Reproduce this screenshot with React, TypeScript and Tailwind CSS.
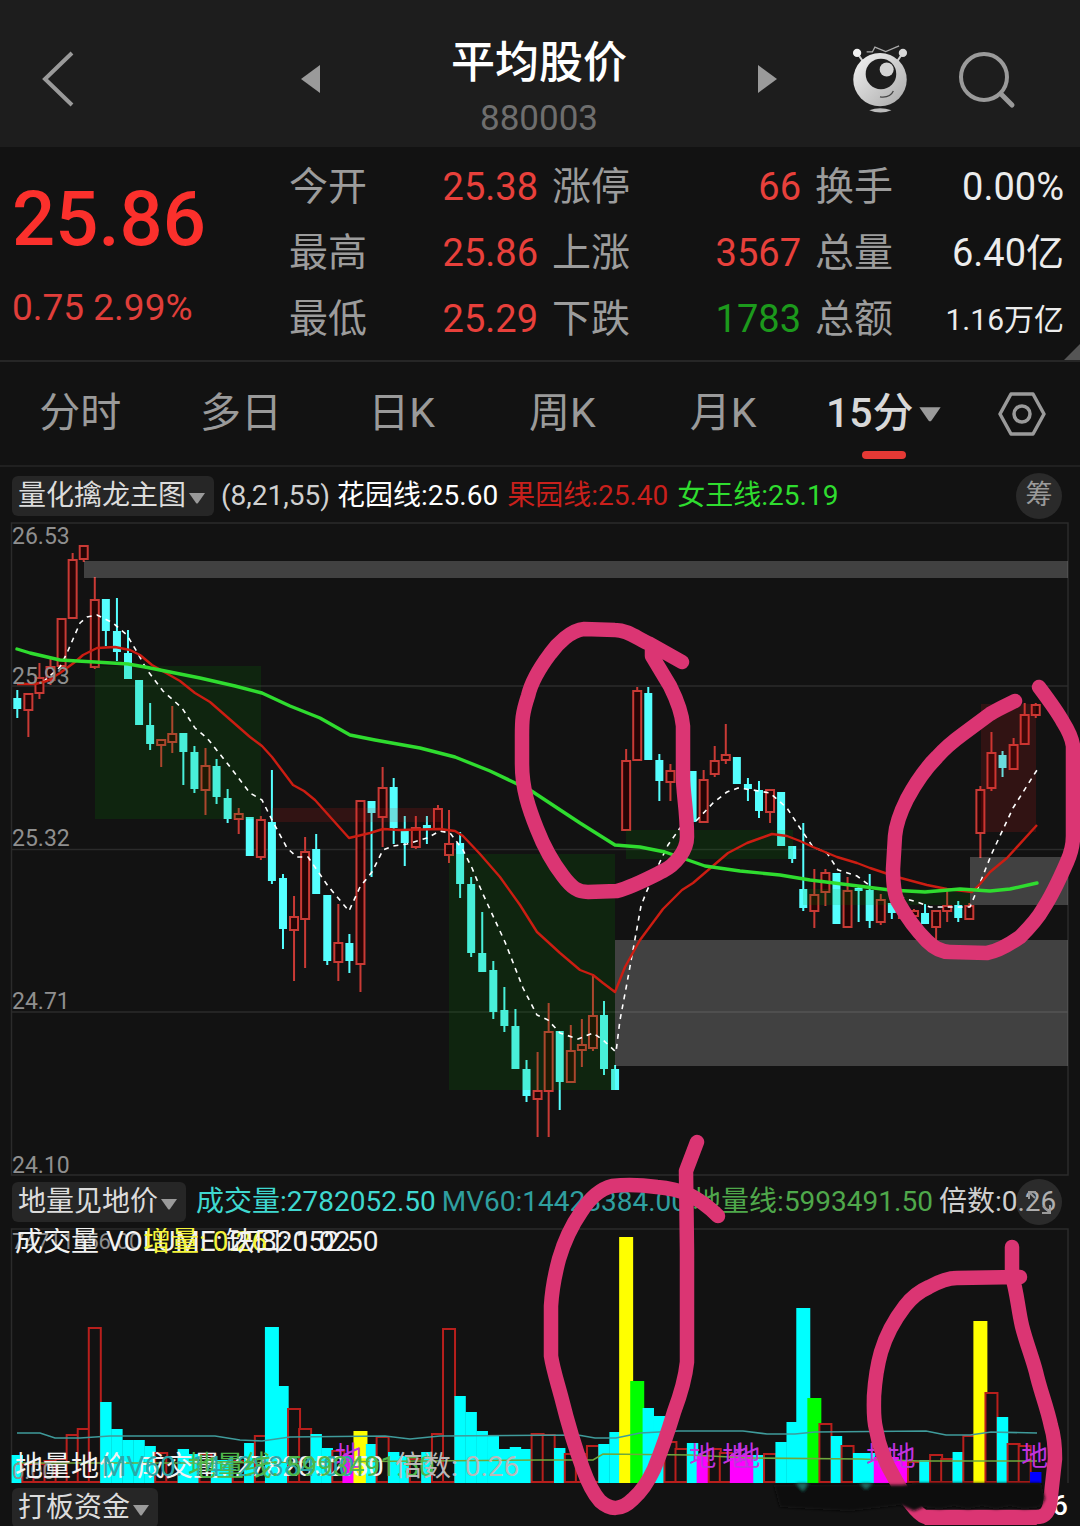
import { clsx } from "clsx";

type Tone = "up" | "down";
// [tone, high, body top, body bottom, low]
type Candle = [Tone, number, number, number, number];

const STEP = 11.07;
const barX = (index: number) => 17.3 + STEP * index;

const quotes = [
  { label: "今开", value: "25.38", color: "text-[#e8403b]" },
  { label: "涨停", value: "66", color: "text-[#e8403b]" },
  { label: "换手", value: "0.00%", color: "text-[#ececec]" },
  { label: "最高", value: "25.86", color: "text-[#e8403b]" },
  { label: "上涨", value: "3567", color: "text-[#e8403b]" },
  { label: "总量", value: "6.40亿", color: "text-[#ececec]" },
  { label: "最低", value: "25.29", color: "text-[#e8403b]" },
  { label: "下跌", value: "1783", color: "text-[#1c9a1c]" },
  { label: "总额", value: "1.16万亿", color: "text-[#ececec]", small: true },
];

const tabs = ["分时", "多日", "日K", "周K", "月K"];

const candles: Candle[] = [
  ["down", 690, 698, 709, 718],
  ["up", 693, 693, 710, 737],
  ["up", 663, 677, 693, 699],
  ["up", 659, 666, 680, 685],
  ["up", 618, 618, 666, 666],
  ["up", 553, 559, 618, 618],
  ["up", 545, 545, 559, 562],
  ["up", 577, 599, 667, 669],
  ["down", 599, 599, 631, 646],
  ["down", 598, 631, 652, 661],
  ["down", 630, 653, 679, 679],
  ["down", 680, 680, 725, 725],
  ["down", 703, 725, 744, 750],
  ["up", 739, 739, 745, 767],
  ["up", 706, 733, 742, 753],
  ["down", 733, 733, 752, 785],
  ["down", 746, 752, 789, 793],
  ["up", 748, 765, 790, 815],
  ["down", 759, 766, 797, 804],
  ["down", 789, 798, 819, 823],
  ["up", 808, 813, 819, 834],
  ["down", 817, 817, 856, 856],
  ["up", 816, 819, 857, 860],
  ["down", 770, 822, 881, 884],
  ["down", 874, 878, 929, 949],
  ["up", 896, 916, 930, 981],
  ["up", 837, 851, 919, 968],
  ["down", 834, 849, 894, 894],
  ["down", 895, 895, 961, 965],
  ["up", 904, 942, 962, 981],
  ["down", 934, 943, 961, 973],
  ["up", 800, 800, 964, 992],
  ["down", 801, 801, 813, 877],
  ["up", 767, 787, 817, 847],
  ["down", 778, 787, 828, 844],
  ["down", 816, 831, 843, 866],
  ["up", 816, 827, 847, 849],
  ["down", 816, 825, 829, 844],
  ["up", 805, 808, 829, 829],
  ["up", 810, 843, 855, 863],
  ["down", 832, 843, 884, 898],
  ["down", 877, 884, 953, 957],
  ["down", 912, 953, 972, 972],
  ["down", 961, 970, 1012, 1019],
  ["down", 987, 1010, 1026, 1032],
  ["down", 1009, 1026, 1069, 1069],
  ["down", 1060, 1069, 1096, 1102],
  ["up", 1052, 1090, 1099, 1137],
  ["up", 1003, 1031, 1091, 1137],
  ["down", 1031, 1031, 1082, 1110],
  ["up", 1025, 1050, 1082, 1082],
  ["up", 1019, 1044, 1050, 1067],
  ["up", 975, 1015, 1048, 1051],
  ["down", 1001, 1015, 1069, 1075],
  ["down", 1065, 1069, 1090, 1090],
  ["up", 749, 760, 830, 830],
  ["up", 687, 690, 760, 760],
  ["down", 687, 693, 760, 760],
  ["down", 754, 760, 781, 801],
  ["up", 764, 770, 782, 801],
  ["up", 772, 772, 782, 782],
  ["down", 771, 771, 822, 822],
  ["up", 770, 779, 822, 822],
  ["up", 746, 760, 774, 777],
  ["up", 724, 754, 760, 764],
  ["down", 757, 757, 784, 784],
  ["down", 778, 784, 789, 801],
  ["down", 781, 790, 811, 818],
  ["up", 789, 789, 812, 823],
  ["down", 792, 792, 846, 846],
  ["down", 846, 846, 859, 863],
  ["down", 823, 889, 908, 911],
  ["up", 869, 894, 911, 928],
  ["up", 869, 872, 892, 906],
  ["down", 873, 873, 924, 924],
  ["up", 877, 890, 927, 927],
  ["down", 886, 888, 891, 922],
  ["down", 874, 890, 921, 928],
  ["up", 894, 899, 922, 925],
  ["down", 903, 903, 913, 919],
  ["up", 908, 910, 918, 918],
  ["up", 909, 910, 916, 922],
  ["down", 904, 913, 924, 924],
  ["up", 910, 910, 927, 941],
  ["up", 890, 905, 911, 922],
  ["down", 901, 905, 918, 922],
  ["up", 903, 905, 919, 919],
  ["up", 786, 789, 833, 858],
  ["up", 732, 752, 788, 791],
  ["down", 751, 755, 768, 777],
  ["up", 738, 744, 769, 769],
  ["up", 703, 714, 744, 744],
  ["up", 703, 704, 715, 718],
];

const zones = [
  { x: 84, y: 561, w: 984, h: 17, fill: "rgba(255,255,255,.2)" },
  { x: 95, y: 666, w: 166, h: 153, fill: "rgba(0,150,0,.15)" },
  { x: 272, y: 808, w: 171, h: 14, fill: "rgba(230,30,30,.15)" },
  { x: 449, y: 854, w: 166, h: 236, fill: "rgba(0,150,0,.15)" },
  { x: 615, y: 940, w: 453, h: 126, fill: "rgba(255,255,255,.2)" },
  { x: 626, y: 830, w: 167, h: 29, fill: "rgba(0,150,0,.15)" },
  { x: 803, y: 889, w: 167, h: 16, fill: "rgba(0,150,0,.15)" },
  { x: 981, y: 704, w: 55, h: 128, fill: "rgba(230,30,30,.15)" },
  { x: 970, y: 857, w: 98, h: 48, fill: "rgba(255,255,255,.2)" },
];

const priceTicks = [
  { label: "26.53", y: 544 },
  { label: "25.93", y: 684 },
  { label: "25.32", y: 846 },
  { label: "24.71", y: 1009 },
  { label: "24.10", y: 1173 },
];

const slowLine =
  "17,649 30,653 60,660 95,662 128,664 145,667 200,678 235,686 262,693 290,706 320,718 350,735 375,740 420,748 455,757 490,771 530,790 580,823 615,845 640,847 665,852 705,866 740,871 780,875 810,880 850,885 890,890 925,892 960,889 990,891 1010,889 1037,883";
const midLine =
  "17,684 35,684 47,681 60,673 75,662 83,655 97,648 115,647 130,650 140,655 152,665 180,681 195,693 210,702 250,737 262,746 272,757 293,785 304,791 315,800 349,838 370,833 383,829 400,830 440,829 455,831 463,836 480,854 500,877 520,905 537,932 548,942 560,953 580,970 593,975 603,983 615,992 625,967 640,940 663,909 682,890 693,883 728,853 747,843 772,834 787,836 800,841 813,847 837,857 857,863 870,868 897,877 927,885 947,889 972,892 980,884 990,872 1007,858 1037,825";
const fastLine =
  "43,682 60,667 67,653 80,623 87,617 97,615 113,623 127,635 137,652 147,670 163,691 182,708 195,728 207,738 227,763 250,793 262,800 272,820 287,848 297,857 308,857 328,886 349,911 360,887 372,872 383,850 393,846 407,844 427,838 440,831 450,833 463,850 472,868 482,892 505,942 523,988 537,1015 548,1020 560,1033 578,1039 593,1033 603,1040 616,1052 620,1020 627,983 641,906 646,893 657,868 668,845 680,828 697,820 713,803 727,792 738,788 753,790 770,793 787,808 800,828 813,847 827,853 838,870 857,876 873,888 890,890 903,898 917,902 930,907 970,907 980,883 992,853 1013,808 1037,770";

// c cyan, r hollow red, y yellow, g green, m magenta, b blue
const volumes =
  "c1455 r1463 r1463 r1460 r1458 r1434 r1428 r1327 c1402 c1429 c1440 c1440 c1446 r1452 r1456 c1449 c1454 r1453 c1460 c1460 r1460 c1443 r1435 c1327 c1386 r1408 r1428 c1434 c1448 r1450 m1455 y1431 c1444 r1436 c1452 c1456 r1458 c1452 r1433 r1328 c1396 c1412 c1431 c1435 c1449 c1447 c1449 r1433 r1434 c1448 r1453 r1453 r1445 c1444 c1432 y1237 g1381 c1408 c1416 r1441 r1448 c1443 m1455 r1448 r1452 m1455 m1455 c1455 r1453 c1442 c1422 c1308 g1398 r1423 c1436 r1445 c1453 c1453 m1457 m1457 m1461 r1461 c1460 r1454 r1458 c1452 r1435 y1321 r1392 c1417 r1443 r1445 b1472"
    .split(" ")
    .map((bar) => ({ kind: bar[0], top: Number(bar.slice(1)) }));

const volumeFill: Record<string, string> = {
  c: "#00ffff",
  y: "#ffff00",
  g: "#00ff00",
  m: "#ff00ff",
  b: "#0000ff",
};

const lowMarks = [30, 62, 65, 66, 78, 80, 92];

const volumeAverage =
  "17,1433 40,1433 55,1438 80,1438 110,1436 215,1436 240,1440 262,1441 290,1437 385,1436 410,1439 440,1436 578,1435 595,1438 616,1438 640,1433 678,1431 743,1431 767,1434 795,1434 815,1432 926,1431 946,1435 970,1435 991,1432 1037,1433";
const volumeFloor =
  "17,1463 200,1463 540,1460 593,1460 603,1454 690,1455 750,1458 860,1459 920,1461 1037,1461";

function Caret({ className }: { className?: string }) {
  return (
    <svg viewBox="0 0 18 12" className={clsx("shrink-0", className)} aria-hidden="true">
      <path d="M1 1h16l-7 10q-1 1-2 0z" fill="#9a9a9a" />
    </svg>
  );
}

function IndicatorButton({ name }: { name: string }) {
  return (
    <button className="flex h-10 shrink-0 items-center gap-0.5 rounded-md bg-[#262626] pr-2 pl-1.5 text-[28px] leading-10 text-[#dcdcdc]">
      {name}
      <Caret className="mt-1 w-[18px]" />
    </button>
  );
}

function Mascot() {
  return (
    <svg viewBox="0 0 200 220" className="h-[70px] w-16" aria-hidden="true">
      <defs>
        <linearGradient id="mascot" x1="0" y1="0" x2="1" y2="1">
          <stop offset="0" stopColor="#f4f4f4" />
          <stop offset="1" stopColor="#a8a8a8" />
        </linearGradient>
      </defs>
      <path d="M58 25h18l8-15 34 14 42-18" fill="none" stroke="#aaa" strokeWidth="4" />
      <path d="M28 28l22 32M172 28l-22 32" stroke="#ccc" strokeWidth="6" />
      <circle cx="28" cy="28" r="13" fill="#f0f0f0" />
      <circle cx="172" cy="28" r="13" fill="#d8d8d8" />
      <circle cx="100" cy="112" r="84" fill="url(#mascot)" />
      <circle cx="103" cy="94" r="48" fill="#1d1d1d" />
      <circle cx="121" cy="80" r="22" fill="#d4d4d4" />
      <path d="M100 166q32 4 42-18" fill="none" stroke="#444" strokeWidth="4" />
      <path d="M66 208q34-12 70 0-34 14-70 0z" fill="#bbb" />
    </svg>
  );
}

function Header() {
  return (
    <header className="flex h-[147px] items-center bg-[#1d1d1d] px-8 pt-2.5">
      <button aria-label="返回" className="w-12">
        <svg viewBox="0 0 48 60" className="h-[60px] w-12">
          <path d="M40 4L13 30l27 26" fill="none" stroke="#9a9a9a" strokeWidth="4" />
        </svg>
      </button>
      <div className="ml-[220px] flex flex-1 items-center justify-between">
        <button aria-label="上一个">
          <svg viewBox="0 0 20 28" className="h-7 w-5">
            <path d="M20 0v28L1 14z" fill="#9a9a9a" />
          </svg>
        </button>
        <div className="pt-6 text-center">
          <h1 className="text-[44px] leading-[52px] font-medium text-white">平均股价</h1>
          <p className="pt-1 text-[35px] leading-[52px] text-[#6e6e6e]">880003</p>
        </div>
        <button aria-label="下一个">
          <svg viewBox="0 0 20 28" className="h-7 w-5">
            <path d="M0 0v28l19-14z" fill="#9a9a9a" />
          </svg>
        </button>
      </div>
      <button aria-label="助手" className="ml-[70px] w-16">
        <Mascot />
      </button>
      <button aria-label="搜索" className="mr-7 ml-11 w-16">
        <svg viewBox="0 0 64 64" className="size-16" fill="none" stroke="#9a9a9a">
          <circle cx="28" cy="30" r="23" strokeWidth="4" />
          <path d="M45 47l11 11" strokeWidth="5" strokeLinecap="round" />
        </svg>
      </button>
    </header>
  );
}

function Quote() {
  return (
    <section className="relative flex border-b-2 border-[#262626] pt-[7px] pr-4 pb-2">
      <div className="w-[289px] shrink-0 pl-3">
        <p className="pt-5 text-[76px] leading-[90px] font-medium text-[#fb302c]">25.86</p>
        <p className="pt-5 text-[37px] leading-12 text-[#e03e3a]">0.75 2.99%</p>
      </div>
      <dl className="grid flex-1 grid-cols-3 gap-x-3.5">
        {quotes.map((q) => (
          <div key={q.label} className="flex h-[66px] items-center justify-between">
            <dt className="text-[39px] text-[#9c9c9c]">{q.label}</dt>
            <dd className={clsx("whitespace-nowrap", q.small ? "text-[30px]" : "text-[38px]", q.color)}>{q.value}</dd>
          </div>
        ))}
      </dl>
      <svg viewBox="0 0 16 16" className="absolute right-0 bottom-0 size-4" aria-hidden="true">
        <path d="M16 0v16H0z" fill="#555" />
      </svg>
    </section>
  );
}

function PeriodTabs() {
  return (
    <nav className="flex h-[105px] border-b-2 border-[#202020] text-[41px]">
      {tabs.map((tab) => (
        <button key={tab} className="flex-1 text-[#9a9a9a]">
          {tab}
        </button>
      ))}
      <button className="relative flex flex-1 items-center justify-center gap-1 text-[#d8d8d8]">
        <span className="font-medium">15分</span>
        <Caret className="w-6" />
        <span className="absolute bottom-1.5 h-2 w-11 rounded-full bg-[#e53935]" />
      </button>
      <button aria-label="设置" className="flex w-[116px] items-center pl-[34px]">
        <svg viewBox="0 0 48 44" className="h-11 w-12" fill="none" stroke="#9a9a9a" strokeWidth="3.5">
          <path d="M13 2h22l11 20-11 20H13L2 22z" strokeLinejoin="round" />
          <circle cx="24" cy="22" r="8" />
        </svg>
      </button>
    </nav>
  );
}

function PriceChart() {
  return (
    <svg viewBox="0 522 1080 654" className="block w-full" role="img" aria-label="15分K线">
      <g stroke="#2b2b2b" strokeWidth="1.5" fill="none">
        <rect x="11.5" y="523" width="1056.5" height="652" />
        <path d="M12 686H1068M12 849.5H1068M12 1012H1068" />
      </g>
      {candles.map(([tone, high, top, bottom, low], i) => {
        const x = barX(i);
        return tone === "up" ? (
          <g key={i} stroke="#c93a35" strokeWidth="2">
            <path d={`M${x} ${high}V${top}M${x} ${bottom}V${low}`} />
            <rect x={x - 4} y={top + 1} width="8" height={Math.max(bottom - top - 1, 3)} fill="#250505" />
          </g>
        ) : (
          <g key={i} fill="#55ffff">
            <rect x={x - 1} y={high} width="2" height={low - high} />
            <rect x={x - 4} y={top} width="8" height={bottom - top} />
          </g>
        );
      })}
      {zones.map((z, i) => (
        <rect key={i} x={z.x} y={z.y} width={z.w} height={z.h} fill={z.fill} />
      ))}
      <g fill="none" strokeLinejoin="round">
        <polyline points={fastLine} stroke="#ffffff" strokeWidth="1.6" strokeDasharray="5 5" />
        <polyline points={midLine} stroke="#cc1d12" strokeWidth="2.4" />
        <polyline points={slowLine} stroke="#2fdc2f" strokeWidth="3.4" strokeLinecap="round" />
      </g>
      {priceTicks.map((tick) => (
        <text key={tick.label} x="12" y={tick.y} fontSize="23" fill="#8f8f8f">
          {tick.label}
        </text>
      ))}
    </svg>
  );
}

function VolumeChart() {
  return (
    <svg viewBox="0 1228 1080 256" className="block w-full" role="img" aria-label="成交量">
      <path d="M11.5 1483V1229H1068V1483" fill="none" stroke="#2b2b2b" strokeWidth="1.5" />
      <text x="12" y="1249" fontSize="22" fill="#8f8f8f">74711856.00</text>
      {volumes.map(({ kind, top }, i) => {
        const x = barX(i);
        const wide = kind === "y" || kind === "g" || kind === "m" || top === 1327 || top === 1308;
        const w = wide ? 14 : 11.4;
        return kind === "r" ? (
          <rect key={i} x={x - 6} y={top + 1} width="12" height={1481 - top} fill="#121212" stroke="#b81f1c" strokeWidth="2" />
        ) : (
          <rect key={i} x={x - w / 2} y={top} width={w} height={1483 - top} fill={volumeFill[kind]} />
        );
      })}
      <polyline points={volumeAverage} fill="none" stroke="#3f9b9b" strokeWidth="1.6" />
      <polyline points={volumeFloor} fill="none" stroke="#6fa83c" strokeWidth="1.6" />
      <g fontSize="27" fill="#c233e0" textAnchor="middle">
        {lowMarks.map((i) => (
          <text key={i} x={barX(i) - 1} y="1466">地</text>
        ))}
      </g>
      <text x="12" y="1479" fontSize="22" fill="#8f8f8f">0.00</text>
      <g fontSize="28">
        <text x="15" y="1251" fill="#f2f2f2">成交量 VOLUME: 2782052.50</text>
        <text x="143" y="1251" fill="#f5f53a">增量: 0.26</text>
        <text x="226" y="1251" fill="#f2f2f2">缺口: 1.02</text>
        <text x="15" y="1476" fill="#f2f2f2">地量地价</text>
        <text x="137" y="1476" fill="#f2f2f2">成交量: 2782052.50</text>
        <text x="102" y="1476" fill="#2ba8a8">MV60: 14428384.00</text>
        <text x="188" y="1476" fill="#4fb84a">地量线: 5993491.50</text>
        <text x="395" y="1476" fill="#b9b9b9">倍数: 0.26</text>
      </g>
    </svg>
  );
}

// hand-drawn marker strokes lying over both charts
function Markers() {
  return (
    <svg viewBox="0 468 1080 1058" className="pointer-events-none absolute top-0 left-0 w-full" aria-hidden="true">
      <defs>
        <filter id="smudge" x="-5%" y="-60%" width="110%" height="220%">
          <feGaussianBlur stdDeviation="1.5" />
        </filter>
      </defs>
      <g fill="none" stroke="#db3573" strokeWidth="14.5" strokeLinecap="round" strokeLinejoin="round">
        <path d="M682 663L650 645C638 640 628 631 615 631L584 630C571 631 557 645 550 655C538 671 531 684 528 697C522 715 522 722 522 737V765C522 790 529 810 537 830C544 848 553 864 563 877C572 889 578 893 588 893L617 892C632 888 647 880 663 872C675 866 687 852 687 838C687 810 683 795 683 777V727C682 715 676 699 670 687L652 657V648" />
        <path d="M1015 702C1007 706 998 710 990 715L963 735C952 743 945 749 937 758C925 770 915 785 907 800C900 814 896 825 895 837L893 870C893 885 894 895 898 903C906 917 915 930 927 942C934 949 942 953 950 953L987 954C999 952 1010 945 1020 938C1028 930 1037 921 1043 910C1053 895 1060 879 1067 863C1072 852 1073 846 1073 837V747C1072 739 1068 731 1063 723C1057 712 1048 700 1039 688" />
        <path d="M697 1143L686 1172L687 1253V1363C685 1382 680 1397 674 1413C668 1433 661 1453 654 1470C648 1483 641 1493 633 1500C621 1512 610 1511 600 1502C593 1494 588 1484 583 1470C574 1446 567 1421 561 1397C557 1382 553 1370 551 1357V1307C552 1290 555 1275 559 1260C564 1243 572 1226 581 1213C590 1199 600 1190 612 1187C628 1185 643 1186 657 1188C668 1189 678 1191 688 1195C700 1201 709 1208 718 1217" />
        <path d="M1012 1248V1277C1017 1293 1018 1310 1022 1327C1026 1343 1032 1358 1036 1373C1040 1391 1047 1408 1051 1427C1055 1440 1055 1450 1055 1460L1050 1505C1048 1515 1044 1518 1036 1518H926C918 1518 904 1496 895 1480C886 1465 879 1448 876 1430C873 1418 874 1407 874 1397C875 1382 877 1367 881 1353C886 1336 895 1320 905 1307C912 1298 920 1292 929 1288C938 1283 948 1279 957 1279L1020 1278" />
      </g>
      <path d="M918 1519h122l-4 8H926z" fill="#db3573" />
      <g filter="url(#smudge)">
        <path d="M774 1486H902L916 1484H1041L1045 1500L1040 1508L1024 1510L1010 1507L996 1510L982 1507L968 1510L954 1507L940 1510L924 1508L914 1512L900 1506L850 1512L780 1508z" fill="#101010" />
        <path d="M924 1490h110" stroke="#070707" strokeWidth="10" strokeDasharray="14 5" />
        <path d="M782 1502h116" stroke="#0c0c0c" strokeWidth="8" strokeDasharray="18 6" />
        <path d="M796 1484l12 0-5 8zM860 1484h12l-6 6z" fill="#1b6b62" />
      </g>
    </svg>
  );
}

export default function App() {
  return (
    <main className="w-full overflow-hidden bg-[#121212] font-['Roboto','Noto_Sans_CJK_SC',sans-serif]">
      <Header />
      <Quote />
      <PeriodTabs />
      <div className="relative">
        <div className="flex h-[55px] items-center gap-[7px] px-3 pt-0.5 text-[28px] whitespace-nowrap">
          <IndicatorButton name="量化擒龙主图" />
          <span className="text-[#d0d0d0]">(8,21,55)</span>
          <span className="text-white">花园线:25.60</span>
          <span className="ml-0.5 text-[#c9201c]">果园线:25.40</span>
          <span className="ml-0.5 text-[#2fdc2f]">女王线:25.19</span>
          <button className="mr-1.5 ml-auto size-[46px] rounded-full bg-[#2a2a2a] text-[27px] text-[#9a9a9a]">筹</button>
        </div>
        <PriceChart />
        <div className="relative flex h-[52px] items-center gap-1.5 px-3 text-[28px] whitespace-nowrap">
          <IndicatorButton name="地量见地价" />
          <span className="ml-1 text-[#3fd8d0]">成交量:2782052.50</span>
          <span className="text-[#2f9f9f]">MV60:14428384.00</span>
          <span className="text-[#4fa84b]">地量线:5993491.50</span>
          <span className="text-[#cfcfcf]">倍数:0.26</span>
          <button aria-label="展开" className="absolute right-[18px] size-[46px] rounded-full bg-[#666]/30">
            <svg viewBox="0 0 46 46" fill="none" stroke="#9a9a9a" strokeWidth="2">
              <path d="M20 13h-7v7M13 13l6 6M26 34h8v-8M34 34l-7-7" />
            </svg>
          </button>
        </div>
        <VolumeChart />
        <div className="flex h-[42px] items-start justify-between pt-1 pr-3 pl-3 text-[28px]">
          <IndicatorButton name="打板资金" />
          <span className="leading-9 font-medium text-white">6</span>
        </div>
        <Markers />
      </div>
    </main>
  );
}
